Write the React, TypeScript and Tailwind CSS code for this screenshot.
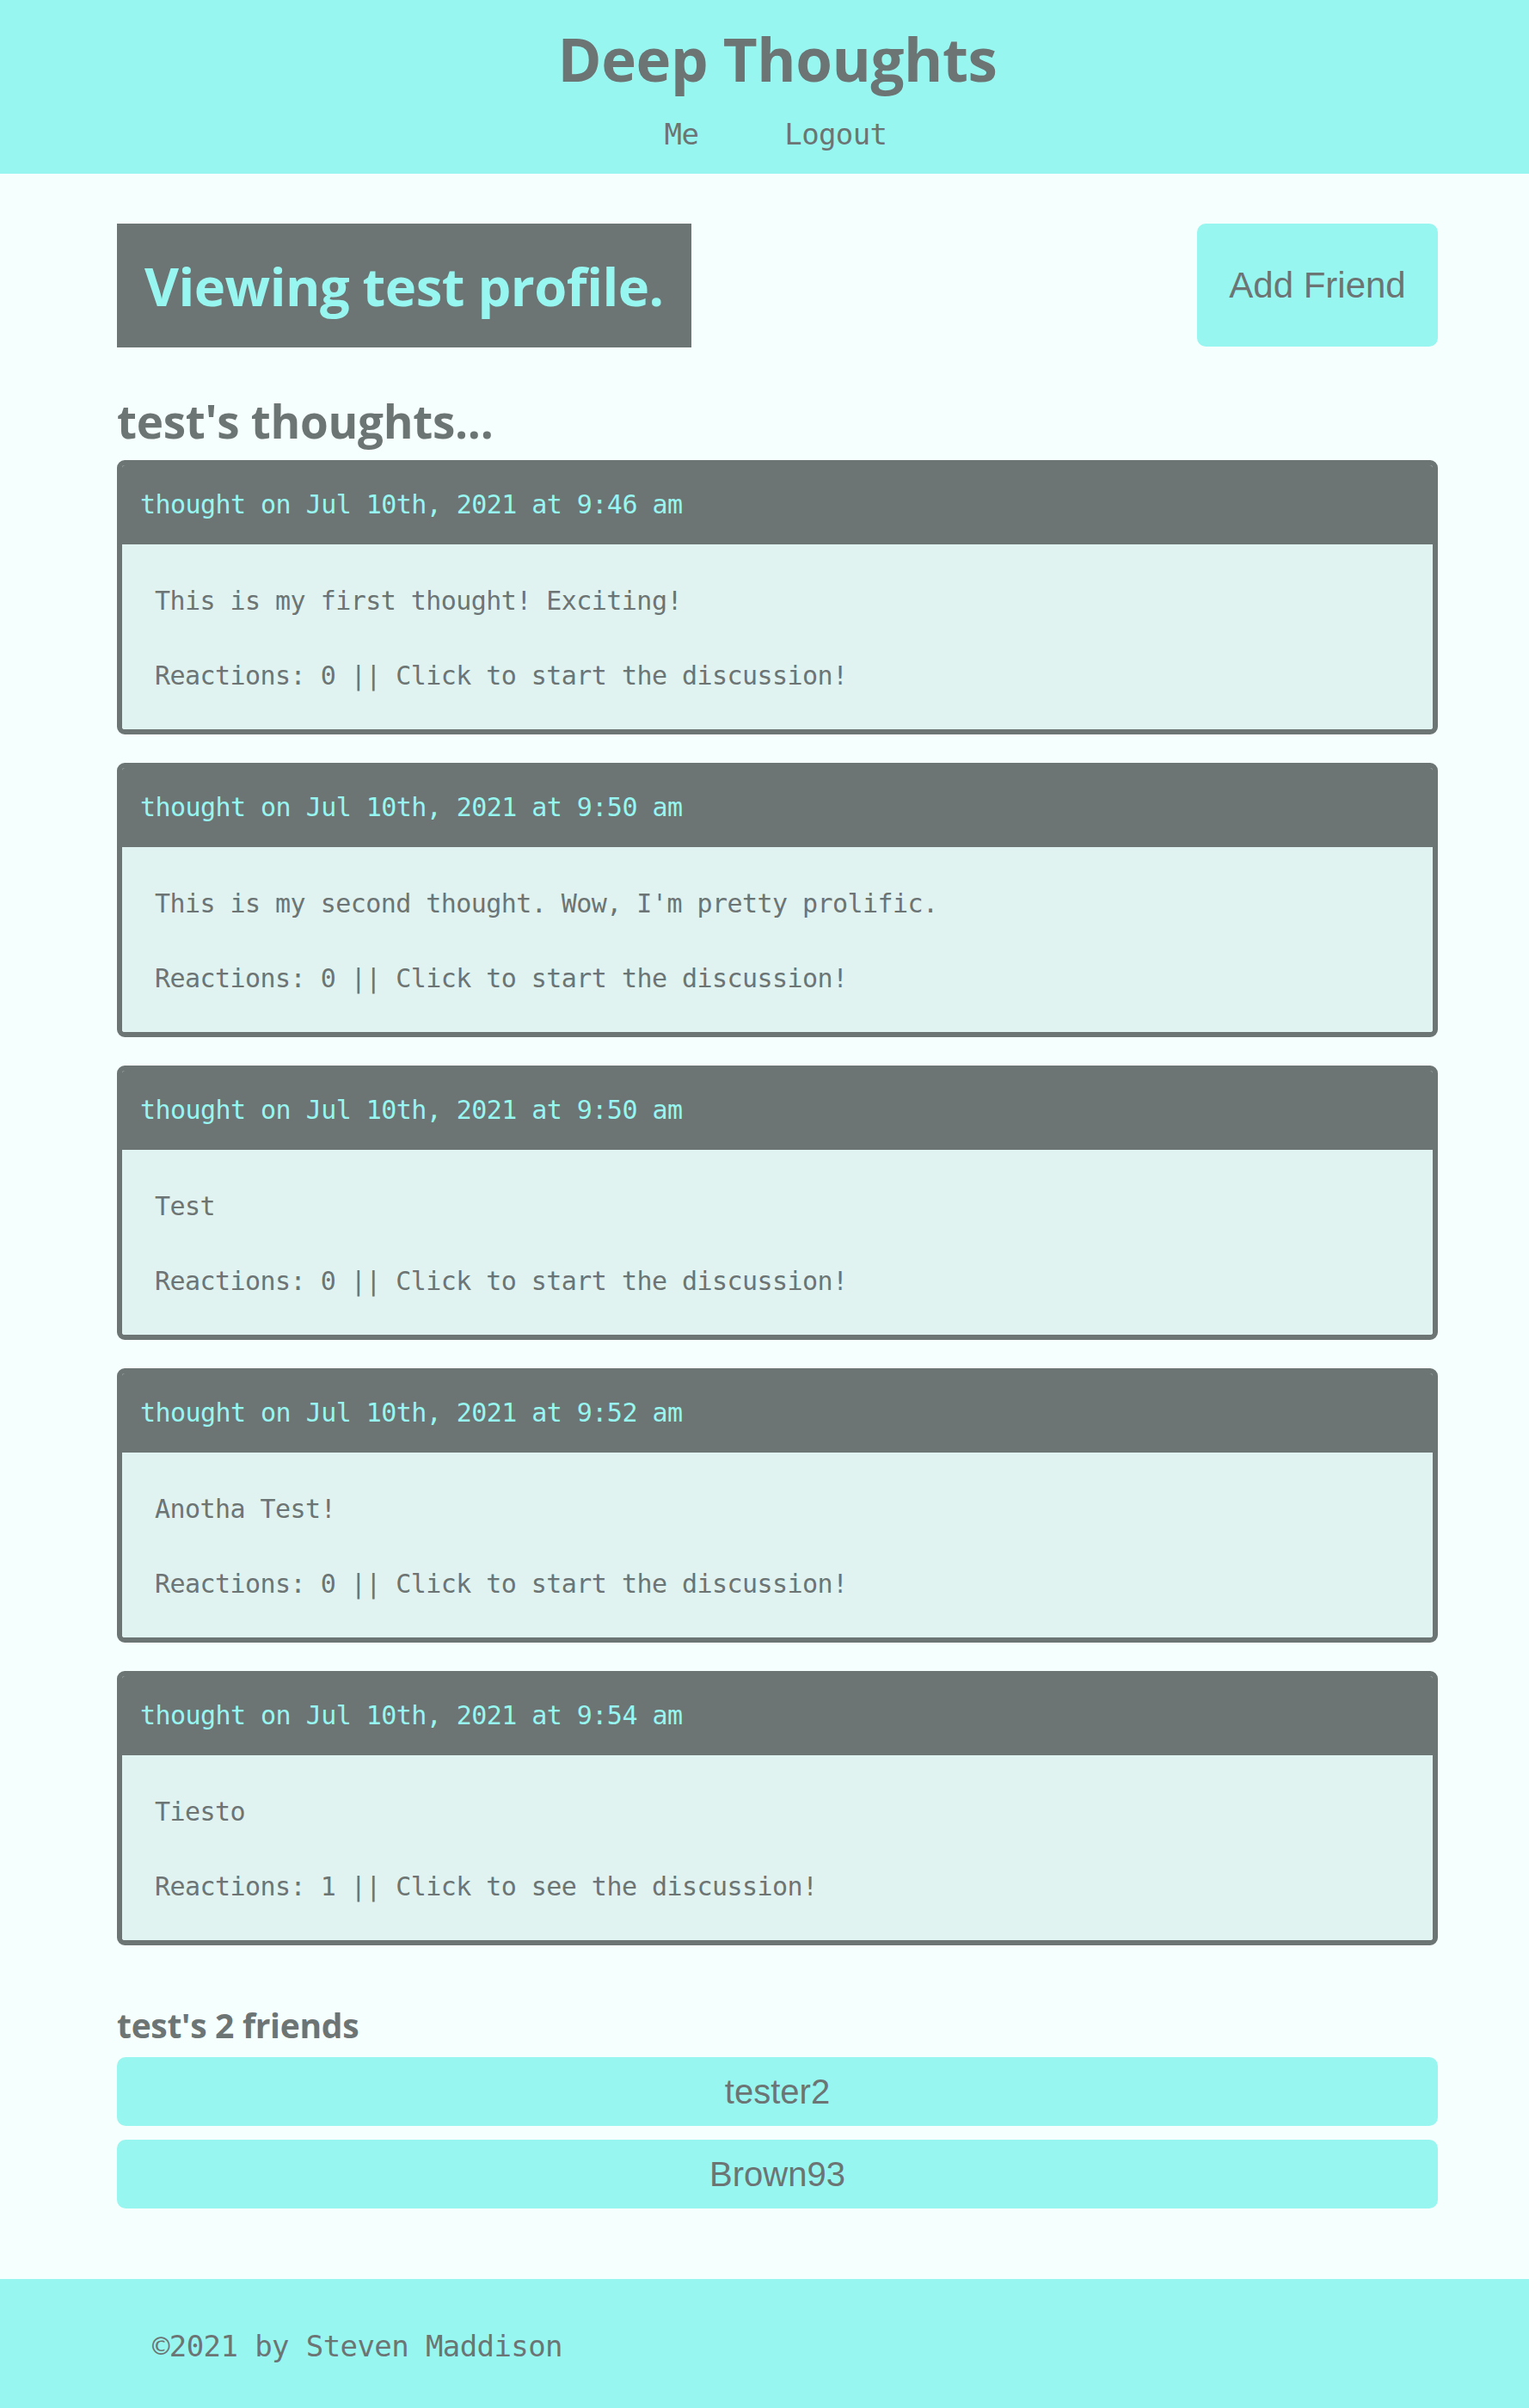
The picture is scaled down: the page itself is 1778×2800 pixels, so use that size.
import React from "react";

const thoughts = [
  { date: "Jul 10th, 2021 at 9:46 am", text: "This is my first thought! Exciting!", reactions: 0 },
  { date: "Jul 10th, 2021 at 9:50 am", text: "This is my second thought. Wow, I'm pretty prolific.", reactions: 0 },
  { date: "Jul 10th, 2021 at 9:50 am", text: "Test", reactions: 0 },
  { date: "Jul 10th, 2021 at 9:52 am", text: "Anotha Test!", reactions: 0 },
  { date: "Jul 10th, 2021 at 9:54 am", text: "Tiesto", reactions: 1 },
];

const mono = "font-['DejaVu_Sans_Mono',monospace]";

export default function App() {
  return (
    <div className="min-h-[2800px] bg-[#f5fffd] flex flex-col font-['Open_Sans',sans-serif] text-[#6c7474]">
      <header className="bg-[#98f6f0] h-[202px] flex flex-col items-center pt-[28px]">
        <h1 className="pl-[30px] text-[69px] leading-[80px] font-bold tracking-[-0.4px]">Deep Thoughts</h1>
        <nav className={`pl-[26px] mt-[28px] flex gap-[100px] text-[34px] leading-[40px] tracking-[-0.6px] ${mono}`}>
          <a>Me</a>
          <a>Logout</a>
        </nav>
      </header>

      <main className="flex-1 pl-[136px] w-[1672px] pt-[58px]">
        <div className="flex justify-between items-start">
          <h2 className="h-[144px] bg-[#6c7474] text-[#98f6f0] px-[32px] flex items-center text-[61.5px] font-bold tracking-[-0.5px]">
            Viewing test profile.
          </h2>
          <button className="w-[280px] h-[143px] rounded-[10px] bg-[#98f6f0] text-[#6c7474] text-[42px] font-['Liberation_Sans',Arial,sans-serif]">
            Add Friend
          </button>
        </div>

        <h3 className="mt-[56px] text-[53px] leading-[60px] font-bold tracking-[-0.3px]">test's thoughts...</h3>

        <div className="mt-[15px] flex flex-col gap-[33px]">
          {thoughts.map((t, i) => (
            <div key={i} className="border-[6px] border-[#6c7474] rounded-[9px] overflow-hidden">
              <div className={`h-[92px] bg-[#6c7474] text-[#98f6f0] flex items-center pl-[21px] text-[30px] leading-[36px] tracking-[-0.55px] ${mono}`}>
                thought on {t.date}
              </div>
              <div className={`bg-[#e0f3f1] pl-[38px] pt-[48px] pb-[44px] flex flex-col gap-[51px] text-[30px] leading-[36px] tracking-[-0.55px] ${mono}`}>
                <p>{t.text}</p>
                <p>
                  Reactions: {t.reactions} || Click to {t.reactions ? "see" : "start"} the discussion!
                </p>
              </div>
            </div>
          ))}
        </div>

        <h4 className="mt-[70px] text-[39px] leading-[46px] font-bold tracking-[-0.3px]">test's 2 friends</h4>
        <div className="mt-[14px] flex flex-col gap-[16px] pb-[80px]">
          {["tester2", "Brown93"].map((f) => (
            <button key={f} className="h-[80px] rounded-[10px] bg-[#98f6f0] text-[#6c7474] text-[40px] font-['Liberation_Sans',Arial,sans-serif]">
              {f}
            </button>
          ))}
        </div>
      </main>

      <footer className={`bg-[#98f6f0] h-[150px] pl-[177px] pt-[58px] text-[34px] leading-[40px] tracking-[-0.6px] ${mono}`}>
        ©2021 by Steven Maddison
      </footer>
    </div>
  );
}
